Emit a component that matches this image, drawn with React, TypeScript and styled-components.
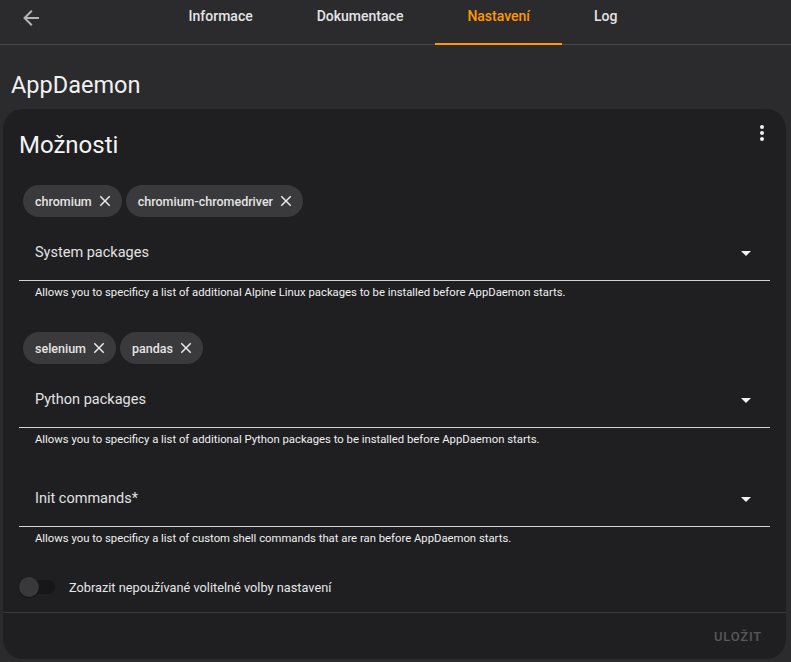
import React from "react";
import styled, { createGlobalStyle } from "styled-components";

const Global = createGlobalStyle`
  html, body { margin: 0; padding: 0; background: #2b2b2d; }
  body { font-family: Roboto, "Noto Sans", sans-serif; color: #e1e1e1; -webkit-font-smoothing: antialiased; }
  * { box-sizing: border-box; }
`;

const Page = styled.div`
  width: 791px;
  height: 662px;
  background: #2b2b2d;
  overflow: hidden;
  display: flex;
  flex-direction: column;
`;

const Toolbar = styled.div`
  height: 45px;
  display: flex;
  align-items: flex-start;
  border-bottom: 1px solid #48484a;
  flex-shrink: 0;
`;

const BackButton = styled.button`
  width: 48px;
  height: 35px;
  margin-left: 7px;
  padding: 0;
  border: none;
  background: transparent;
  color: #b4b4b6;
  display: flex;
  align-items: center;
  justify-content: center;
  cursor: pointer;
`;

const Tabs = styled.nav`
  flex: 1;
  display: flex;
  justify-content: center;
  height: 44px;
`;

const Spacer = styled.div`
  width: 40px;
`;

const Tab = styled.div<{ $active?: boolean }>`
  position: relative;
  height: 44px;
  padding: 6px 32px 0;
  font-size: 14px;
  line-height: 20px;
  font-weight: 500;
  color: ${(p) => (p.$active ? "#ff9800" : "#e4e4e6")};
  white-space: nowrap;
  &::after {
    content: "";
    display: ${(p) => (p.$active ? "block" : "none")};
    position: absolute;
    left: 0;
    right: 0;
    bottom: -1px;
    height: 2px;
    background: #ff9800;
  }
`;

const Main = styled.main`
  flex: 1;
  padding: 24px 5px 3px 3px;
  display: flex;
  flex-direction: column;
`;

const PageTitle = styled.h1`
  margin: 0 0 8px 8px;
  font-size: 23.5px;
  line-height: 32px;
  font-weight: 400;
  color: #f1f1f1;
`;

const Card = styled.section`
  position: relative;
  flex: 1;
  background: #1f1f21;
  border-radius: 20px;
  display: flex;
  flex-direction: column;
`;

const CardTitle = styled.h2`
  margin: 0;
  padding: 20px 16px 0 16px;
  font-size: 24px;
  line-height: 32px;
  font-weight: 400;
  color: #f4f4f4;
`;

const MenuButton = styled.div`
  position: absolute;
  top: 12px;
  right: 12px;
  width: 24px;
  height: 24px;
  color: #f0f0f0;
`;

const Sections = styled.div`
  padding: 15px 16px 0;
  display: flex;
  flex-direction: column;
  gap: 22px;
`;

const Section = styled.div`
  display: flex;
  flex-direction: column;
`;

const ChipRow = styled.div`
  display: flex;
  gap: 4px;
  padding: 9px 4px 7px;
`;

const Chip = styled.span`
  height: 32px;
  border-radius: 16px;
  background: #3a3a3c;
  display: inline-flex;
  align-items: center;
  padding: 0 8px 0 12px;
  gap: 4px;
  font-size: 12.5px;
  font-weight: 500;
  color: #e4e4e4;
`;

const ChipClose = styled.span`
  width: 18px;
  height: 18px;
  display: flex;
  color: #e8e8e8;
`;

const Field = styled.div`
  height: 57px;
  border-bottom: 1px solid #d2d2d2;
  display: flex;
  align-items: center;
  justify-content: space-between;
  padding: 0 19px 0 16px;
`;

const FieldLabel = styled.span`
  font-size: 14.5px;
  color: #e2e2e2;
`;

const Caret = styled.span`
  width: 0;
  height: 0;
  border-left: 5px solid transparent;
  border-right: 5px solid transparent;
  border-top: 5px solid #f2f2f2;
  margin-top: 2px;
`;

const Helper = styled.div`
  padding: 4px 16px 0;
  font-size: 11.3px;
  line-height: 16px;
  color: #f0f0f0;
`;

const ToggleRow = styled.label`
  margin-top: 20px;
  height: 40px;
  padding: 0 16px;
  display: flex;
  align-items: center;
  gap: 14px;
  font-size: 12.75px;
  color: #e6e6e6;
`;

const Switch = styled.span`
  position: relative;
  width: 36px;
  height: 20px;
  display: flex;
  align-items: center;
`;

const SwitchTrack = styled.span`
  margin-left: 1px;
  width: 35px;
  height: 14px;
  border-radius: 7px;
  background: #171718;
`;

const SwitchThumb = styled.span`
  position: absolute;
  left: 0;
  top: 0;
  width: 20px;
  height: 20px;
  border-radius: 50%;
  background: #39393b;
  box-shadow: 0 1px 2px rgba(0, 0, 0, 0.4);
`;

const Actions = styled.div`
  margin-top: auto;
  border-top: 1px solid #39393b;
  padding: 5px 16px;
  display: flex;
  justify-content: flex-end;
`;

const SaveButton = styled.button`
  height: 36px;
  padding: 0 8px;
  border: none;
  background: transparent;
  font-family: Roboto, sans-serif;
  font-size: 13px;
  font-weight: 500;
  letter-spacing: 0.8px;
  text-transform: uppercase;
  color: #58585a;
`;

const CloseIcon = () => (
  <svg width="18" height="18" viewBox="0 0 24 24" fill="currentColor">
    <path d="M19,6.41L17.59,5L12,10.59L6.41,5L5,6.41L10.59,12L5,17.59L6.41,19L12,13.41L17.59,19L19,17.59L13.41,12L19,6.41Z" />
  </svg>
);

const sections = [
  {
    chips: ["chromium", "chromium-chromedriver"],
    label: "System packages",
    helper:
      "Allows you to specificy a list of additional Alpine Linux packages to be installed before AppDaemon starts.",
  },
  {
    chips: ["selenium", "pandas"],
    label: "Python packages",
    helper:
      "Allows you to specificy a list of additional Python packages to be installed before AppDaemon starts.",
  },
  {
    chips: [] as string[],
    label: "Init commands*",
    helper:
      "Allows you to specificy a list of custom shell commands that are ran before AppDaemon starts.",
  },
];

export default function App() {
  return (
    <>
      <Global />
      <Page>
        <Toolbar>
          <BackButton aria-label="Zpět">
            <svg width="24" height="24" viewBox="0 0 24 24" fill="currentColor">
              <path d="M20,11V13H8L13.5,18.5L12.08,19.92L4.16,12L12.08,4.08L13.5,5.5L8,11H20Z" />
            </svg>
          </BackButton>
          <Tabs>
            <Tab>Informace</Tab>
            <Tab>Dokumentace</Tab>
            <Tab $active>Nastavení</Tab>
            <Tab>Log</Tab>
          </Tabs>
          <Spacer />
        </Toolbar>
        <Main>
          <PageTitle>AppDaemon</PageTitle>
          <Card>
            <CardTitle>Možnosti</CardTitle>
            <MenuButton>
              <svg width="24" height="24" viewBox="0 0 24 24" fill="currentColor">
                <path d="M12,16A2,2 0 0,1 14,18A2,2 0 0,1 12,20A2,2 0 0,1 10,18A2,2 0 0,1 12,16M12,10A2,2 0 0,1 14,12A2,2 0 0,1 12,14A2,2 0 0,1 10,12A2,2 0 0,1 12,10M12,4A2,2 0 0,1 14,6A2,2 0 0,1 12,8A2,2 0 0,1 10,6A2,2 0 0,1 12,4Z" />
              </svg>
            </MenuButton>
            <Sections>
              {sections.map((s) => (
                <Section key={s.label}>
                  {s.chips.length > 0 && (
                    <ChipRow>
                      {s.chips.map((c) => (
                        <Chip key={c}>
                          {c}
                          <ChipClose>
                            <CloseIcon />
                          </ChipClose>
                        </Chip>
                      ))}
                    </ChipRow>
                  )}
                  <Field>
                    <FieldLabel>{s.label}</FieldLabel>
                    <Caret />
                  </Field>
                  <Helper>{s.helper}</Helper>
                </Section>
              ))}
            </Sections>
            <ToggleRow>
              <Switch>
                <SwitchTrack />
                <SwitchThumb />
              </Switch>
              Zobrazit nepoužívané volitelné volby nastavení
            </ToggleRow>
            <Actions>
              <SaveButton>Uložit</SaveButton>
            </Actions>
          </Card>
        </Main>
      </Page>
    </>
  );
}
